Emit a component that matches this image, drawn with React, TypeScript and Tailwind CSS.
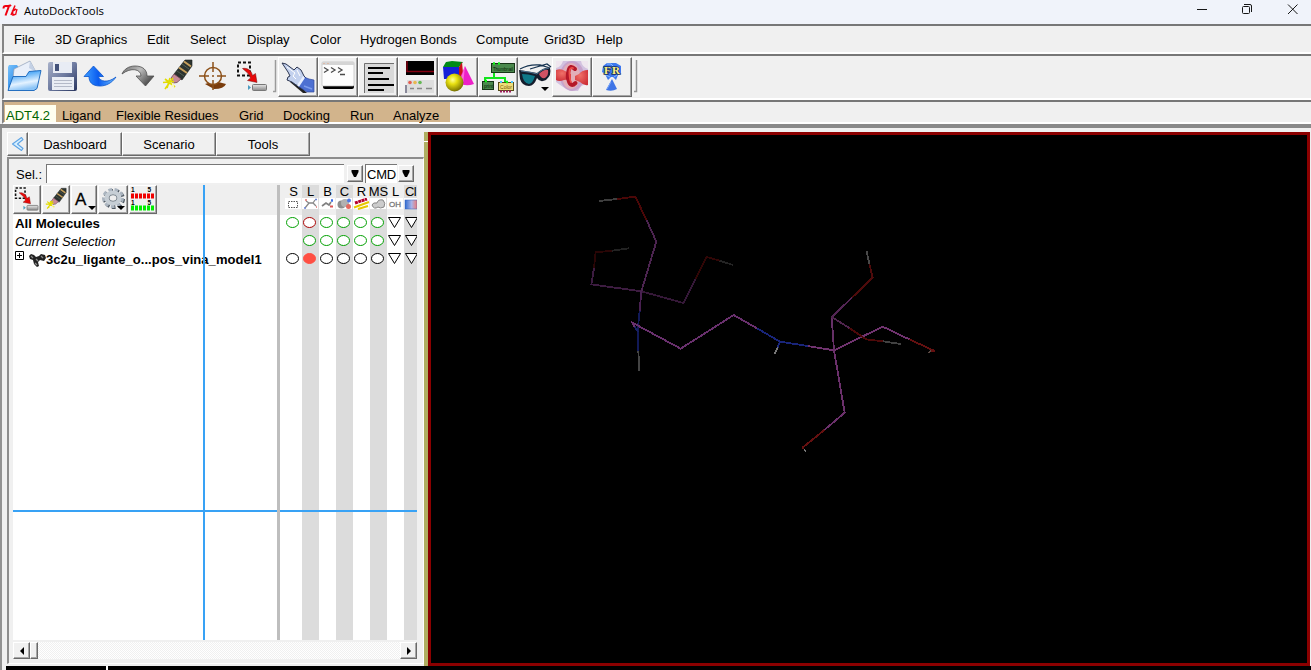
import React from "react";

type Box = [number, number, number, number];

function Art({ box, children, className = "" }: { box: Box; children: React.ReactNode; className?: string }) {
  return (
    <svg
      width={box[2]}
      height={box[3]}
      viewBox={box.join(" ")}
      className={"block shrink-0 " + className}
      fontFamily='"Liberation Sans", Arial, sans-serif'
    >
      {children}
    </svg>
  );
}

const raised =
  "border border-t-white border-l-white border-r-[#696969] border-b-[#696969] bg-[#f0f0f0] shadow-[inset_-1px_-1px_0_#a6a6a6]";

function Defs() {
  return (
    <svg width="0" height="0" className="absolute">
      <defs>
        <linearGradient id="folder" x1="0" y1="0" x2="1" y2="1">
          <stop offset="0" stopColor="#7cc4fb" />
          <stop offset="0.5" stopColor="#3b96ee" />
          <stop offset="1" stopColor="#0c55b8" />
        </linearGradient>
        <linearGradient id="folderFront" x1="0" y1="0" x2="0.3" y2="1">
          <stop offset="0" stopColor="#1f86f0" />
          <stop offset="0.3" stopColor="#5db0f8" />
          <stop offset="0.7" stopColor="#e4f2ff" />
          <stop offset="1" stopColor="#8cc4f6" />
        </linearGradient>
        <linearGradient id="disk" x1="0" y1="0" x2="1" y2="1">
          <stop offset="0" stopColor="#a9b2ca" />
          <stop offset="0.5" stopColor="#6e7ba0" />
          <stop offset="1" stopColor="#28345e" />
        </linearGradient>
        <linearGradient id="undo" x1="0" y1="0" x2="1" y2="0">
          <stop offset="0" stopColor="#3f9fff" />
          <stop offset="0.45" stopColor="#0a5cf0" />
          <stop offset="1" stopColor="#6fc0ff" />
        </linearGradient>
        <linearGradient id="redo" x1="0" y1="0" x2="1" y2="0.6">
          <stop offset="0" stopColor="#6c6c6c" />
          <stop offset="0.5" stopColor="#bdbdbd" />
          <stop offset="1" stopColor="#4a4a4a" />
        </linearGradient>
        <linearGradient id="silver" x1="0" y1="0" x2="0" y2="1">
          <stop offset="0" stopColor="#e8e8e8" />
          <stop offset="1" stopColor="#8a8a8a" />
        </linearGradient>
        <radialGradient id="yellow" cx="0.4" cy="0.35" r="0.7">
          <stop offset="0" stopColor="#ffff9a" />
          <stop offset="0.35" stopColor="#e8e010" />
          <stop offset="1" stopColor="#6c6600" />
        </radialGradient>
        <radialGradient id="redball" cx="0.4" cy="0.35" r="0.7">
          <stop offset="0" stopColor="#f07068" />
          <stop offset="1" stopColor="#cf3038" />
        </radialGradient>
        <linearGradient id="spectrum" x1="0" y1="0" x2="1" y2="0">
          <stop offset="0" stopColor="#2f6bd0" />
          <stop offset="0.55" stopColor="#a8b4e8" />
          <stop offset="1" stopColor="#ee7a78" />
        </linearGradient>
        <pattern id="dither" width="2" height="2" patternUnits="userSpaceOnUse">
          <rect width="2" height="2" fill="#fff" />
          <rect width="1" height="1" fill="#f0f0f0" />
          <rect x="1" y="1" width="1" height="1" fill="#f0f0f0" />
        </pattern>
      </defs>
    </svg>
  );
}

/* Shared drawings, placed in toolbar coordinates */
function EraserArt() {
  return (
    <g>
      <path d="M185 60h7v6l-10 14-8-6z" fill="#2c3330" stroke="#1c211f" strokeWidth=".6" />
      <path d="M184 61.500l7 5M179 67.500l8 5.500" stroke="#c8a05c" strokeWidth="2" />
      <path d="M182 64l7 5M177 71l7 5" stroke="#526052" strokeWidth="1" />
      <path d="M174 74l7 5-4 3.500-4 .5-2-5z" fill="#c88b98" stroke="#6a4450" strokeWidth=".8" />
      <path d="M170 78l-3 10M163 82.500l11-1M165 79l10 8M173 78l-8 11" stroke="#e2dc00" strokeWidth="1.700" />
      <path d="M169 91l4-7 1 5" stroke="#fbf8c8" strokeWidth="1.200" fill="none" />
    </g>
  );
}

function SelectArt() {
  return (
    <g>
      <rect x="238" y="62.500" width="12" height="13" fill="none" stroke="#111" strokeWidth="2" strokeDasharray="3 2" />
      <path d="M242.500 68.500c5-1 9 2 10 7l3-2 1.500 9-9.500-2 3-2.500c-1-4-4-6-8-9.500z" fill="#e80808" stroke="#6c1010" strokeWidth=".5" />
      <path d="M248 85l3 2.500-3 2.500z" fill="#4c9cc0" />
      <rect x="252.500" y="84.500" width="14" height="6" rx="1" fill="url(#silver)" stroke="#777" />
    </g>
  );
}

function FlatTools() {
  return (
    <>
      <Art box={[5, 57, 40, 40]}>
        <path d="M8 90V67l1-2h8l2 3 4 1v21z" fill="url(#folder)" />
        <path d="M14 69l16-8 6 11-2 6H13z" fill="#e9eff9" stroke="#8c9db8" strokeWidth=".7" />
        <path d="M30 61l-1 7 7 4z" fill="#c3d0e4" />
        <path d="M8 90.500l5-14h13l3-5 12-1-4 18-3 2z" fill="url(#folderFront)" stroke="#1463ba" strokeWidth=".9" />
      </Art>
      <Art box={[45, 57, 36, 40]}>
        <rect x="48" y="62" width="29" height="29" rx="2" fill="url(#disk)" />
        <path d="M53 62h19v11H53z" fill="#e8ecf4" />
        <rect x="55" y="64" width="4" height="7" fill="#43527a" />
        <path d="M52 77h22v13H52z" fill="#e9edf4" />
        <path d="M54 80.500h18M54 83.500h18M54 86.500h18" stroke="#b4bac8" />
      </Art>
      <Art box={[81, 57, 38, 40]}>
        <path d="M93.500 66l10 10.500h-5c1 5 9 7 17.500.5-4 6-10 9-16 9-8 0-11-4-11-9.500h-5z" fill="url(#undo)" stroke="#0753cd" strokeWidth=".8" />
      </Art>
      <Art box={[119, 57, 40, 40]}>
        <path d="M122 74c2-5 7-8 13-8 8 0 12 4 12 10h7l-8.500 10L136 76h5c0-7-10-9-19-2z" fill="url(#redo)" stroke="#505050" strokeWidth=".8" />
      </Art>
      <Art box={[159, 57, 37, 40]}><EraserArt /></Art>
      <Art box={[196, 57, 36, 40]}>
        <path d="M205 84q9-4 21 0-2 5-12 5z" fill="#7a3c0c" />
        <circle cx="213" cy="76" r="8.500" fill="#f0f0f0" stroke="#8c5018" strokeWidth="1.500" />
        <path d="M213 62v10M213 80v10M199 76h10M217 76h9M213 75v2" stroke="#8c5018" strokeWidth="1.500" />
      </Art>
      <Art box={[232, 57, 41, 40]}>
        <SelectArt />
      </Art>
      <Art box={[273, 57, 5, 40]}>
        <path d="M273 91.500h2.500V60" fill="none" stroke="#9b9b9b" strokeWidth="1.500" />
      </Art>
    </>
  );
}

function RaisedTool({ x, children }: { x: number; children: React.ReactNode }) {
  return (
    <div className={"h-[40px] w-[40px] shrink-0 " + raised}>
      <Art box={[x + 1, 58, 38, 38]}>{children}</Art>
    </div>
  );
}

function RaisedTools() {
  return (
    <>
      <RaisedTool x={278}>
        <path d="M290 82l13 11h4l-12-13z" fill="#222" />
        <path d="M282 63l4 1 8 6 3-3 4 3 3 6 3 3-5 7-6-1-4-3-5-2 1-3 2-1-2-4z" fill="#c3d1ee" stroke="#2b3550" strokeWidth="1" />
        <path d="M287 67l8 6-2 3 3 3M297 70l3 6" stroke="#fff" fill="none" />
        <path d="M304 77l5 2 5 1v12h-7l-9-6z" fill="#4d70d2" stroke="#334a9c" strokeWidth=".7" />
        <path d="M298 86l6-9" stroke="#e9f0ff" strokeWidth="2.500" />
        <path d="M304 86l8 3" stroke="#7d9cec" strokeWidth="1.500" />
      </RaisedTool>
      <RaisedTool x={318}>
        <rect x="323" y="84" width="31" height="5" rx="2" fill="#000" />
        <rect x="322" y="62" width="32" height="24" rx="1" fill="#fdfdfd" stroke="#bbb" strokeWidth=".7" />
        <path d="M322 62h32v3h-32z" fill="#d5d5d5" />
        <path d="M323 63.500h2M327 63.500h2" stroke="#dba" />
        <path d="M324 67.500l4 2.500-4 2.500M331 67.500l4 2.500-4 2.500M338 67.500l4 2.500-4 2.500M340 74.500h5" fill="none" stroke="#4a4a4a" strokeWidth="1.300" />
      </RaisedTool>
      <RaisedTool x={358}>
        <rect x="364" y="63" width="30" height="30" fill="#d9d9d9" />
        <path d="M364.500 93V63.500H394" fill="none" stroke="#707070" />
        <path d="M368 68h22M368 73h15M368 79h21M368 85h26M368 90h16" stroke="#000" strokeWidth="2" />
      </RaisedTool>
      <RaisedTool x={398}>
        <rect x="406" y="61" width="28" height="14" fill="#000" />
        <path d="M407 61v10.500h27" fill="none" stroke="#830010" strokeWidth="1.500" />
        <rect x="407" y="80" width="27" height="13" fill="#dedede" />
        <path d="M406 85v8" stroke="#224" />
        <circle cx="410" cy="82.500" r="1.800" fill="#e55c50" />
        <circle cx="415" cy="82.500" r="1.800" fill="#e8b850" />
        <circle cx="420" cy="82.500" r="1.800" fill="#65b855" />
        <path d="M410 88.500h4M417 88.500h5M426 88.500h6" stroke="#888" strokeWidth="1.500" />
      </RaisedTool>
      <RaisedTool x={438}>
        <path d="M443 67l3-5 6-1 11 1-4 5z" fill="#008b18" />
        <path d="M443 67h16v12h-15z" fill="#1620d8" />
        <path d="M459 67l3-5 1 11-4 6z" fill="#cc1018" />
        <path d="M465 66l9 18q-8 3-16-1z" fill="#ed20c8" />
        <path d="M465 66l-2 19-4-1z" fill="#ff68dd" />
        <circle cx="454.500" cy="82.500" r="9" fill="url(#yellow)" />
      </RaisedTool>
      <RaisedTool x={478}>
        <path d="M494 72v6M485 83v-5h20v5" fill="none" stroke="#11e51c" strokeWidth="2" />
        <rect x="491.500" y="63.500" width="23" height="9" fill="#4b884d" stroke="#173417" />
        <text x="493" y="70.500" fontSize="6" textLength="20" lengthAdjust="spacingAndGlyphs" fill="#001c00">Thumbnail</text>
        <rect x="482.500" y="81.500" width="11" height="8" fill="#4b884d" stroke="#173417" />
        <text x="484" y="88" fontSize="6" textLength="9" lengthAdjust="spacingAndGlyphs" fill="#001c00">print</text>
        <rect x="498.500" y="82.500" width="15" height="8" fill="#eedc78" stroke="#554b18" />
        <text x="500" y="89" fontSize="6" textLength="12" lengthAdjust="spacingAndGlyphs" fill="#754f00">Color</text>
        <path d="M493 63.500h2M498 63.500h2M485 81h2M506 82h2" stroke="#12ef18" strokeWidth="2.500" />
        <path d="M500 82h2M511 82h2" stroke="#4ac4ff" strokeWidth="2" />
        <path d="M500 91.500h12" stroke="#a02060" strokeWidth="2" strokeDasharray="2 1" />
      </RaisedTool>
      <Art box={[518, 57, 34, 40]}>
        <path d="M520 69q9-5 20-4l10 3M530 69l17-5 4 3" fill="none" stroke="#173451" strokeWidth="1.300" />
        <path d="M519 70q7 1 18 3 7-6 13-5 2 7-4 12-6 3-9-2-3 8-8 8-7 0-9-7z" fill="#151d2c" />
        <path d="M522 74q6 0 13 2-2 7-6 8-6-1-7-10z" fill="#0f7888" />
        <path d="M539 74q5-5 9-4 1 5-3 8-4 1-6-4z" fill="#d05263" />
        <path d="M521 71q10 1 16 3 4-5 12-6" fill="none" stroke="#5c88aa" strokeWidth=".8" />
        <path d="M541 87h8l-4 4z" fill="#000" />
      </Art>
      <RaisedTool x={552}>
        <rect x="556" y="61" width="32" height="30" fill="#d2c2df" />
        <path d="M556 91V82q8 6 14 9zM578 91q4-8 10-6v6z" fill="#f3eef2" />
        <path d="M556 61h7q-2 6-7 7zM581 61h7v8q-6-2-7-8z" fill="#efe6ee" />
        <ellipse cx="572" cy="76" rx="12" ry="15" fill="#b675af" opacity=".4" />
        <ellipse cx="571" cy="76" rx="9" ry="13" fill="#eeb3b0" opacity=".7" />
        <path d="M556 70q5-2 9 1l6 3v5l-7 1q-5 2-8 0z" fill="url(#redball)" />
        <path d="M588 70q-6 0-9 4l-4 2v4l5 2q4 4 8 3z" fill="url(#redball)" />
        <path d="M575 69q-5-5-6.500 2t0 9q2 8 7 3" stroke="#b41829" strokeWidth="4" fill="none" strokeLinecap="round" />
        <path d="M573 68q-4-1-3.500 6t1.500 8" stroke="#ef504b" strokeWidth="1.800" fill="none" strokeLinecap="round" />
      </RaisedTool>
      <RaisedTool x={592}>
        <path d="M603 66l4-3h9l5 3v7l-3 2-2 5-3-3h-2l-3 3-3-6-3-2z" fill="#3d78ef" />
        <path d="M607 64h4l3 3M617 75l-3 2M606 75l4 2" stroke="#8bb9fd" fill="none" />
        <text x="604" y="74" fontSize="11" fontWeight="bold" fontFamily="'Liberation Serif', serif" textLength="16" fill="#fff384" stroke="#172e62" strokeWidth="1.500" paintOrder="stroke">FR</text>
        <path d="M612 79l5 10q-5 3-11 1z" fill="#3f75e6" />
        <path d="M611 82l-4 7" stroke="#79a5f8" />
      </RaisedTool>
      <Art box={[632, 57, 8, 40]}>
        <path d="M632 57h8v40h-8z" fill="#f4f4f4" />
        <path d="M634 91.500h2.500V60" fill="none" stroke="#969696" strokeWidth="1.500" />
      </Art>
    </>
  );
}

const menus: [string, string][] = [
  ["File", "w-[41px]"],
  ["3D Graphics", "w-[92px]"],
  ["Edit", "w-[43px]"],
  ["Select", "w-[57px]"],
  ["Display", "w-[63px]"],
  ["Color", "w-[50px]"],
  ["Hydrogen Bonds", "w-[116px]"],
  ["Compute", "w-[68px]"],
  ["Grid3D", "w-[52px]"],
  ["Help", "w-[40px]"],
];

const dockMenus: [string, string][] = [
  ["Ligand", "w-[54px]"],
  ["Flexible Residues", "w-[123px]"],
  ["Grid", "w-[44px]"],
  ["Docking", "w-[67px]"],
  ["Run", "w-[43px]"],
  ["Analyze", "w-[57px]"],
];

const columnNames = ["S", "L", "B", "C", "R", "MS", "L", "Cl"];

function DropButton() {
  return (
    <button className={"flex h-[17px] w-[16px] items-center justify-center " + raised}>
      <svg width="8" height="8" viewBox="0 0 8 8"><path d="M.5 0h7v2L5 7H3L.5 2z" /></svg>
    </button>
  );
}

function SmallTools() {
  return (
    <div className="flex h-[29px]">
      <div className={"mr-px h-[29px] w-[28px] " + raised}>
        <svg width="26" height="27" viewBox="236 60 33 34"><SelectArt /></svg>
      </div>
      <div className={"mr-px h-[29px] w-[28px] " + raised}>
        <svg width="26" height="27" viewBox="159 57 37 38"><EraserArt /></svg>
      </div>
      <div className={"mr-px h-[29px] w-[26px] " + raised}>
        <Art box={[0, 0, 24, 27]}>
          <text x="3" y="19" fontSize="17" stroke="#000" strokeWidth=".3">A</text>
          <path d="M16 20h8l-4 4z" />
        </Art>
      </div>
      <div className={"mr-px h-[29px] w-[30px] " + raised}>
        <Art box={[0, 0, 28, 27]}>
          <ellipse cx="15" cy="13" rx="9" ry="8" fill="none" stroke="#4f5963" strokeWidth="4" strokeDasharray="3.500 2.400" />
          <ellipse cx="14" cy="12" rx="9" ry="8" fill="none" stroke="#aab4bf" strokeWidth="4" strokeDasharray="3.500 2.400" />
          <ellipse cx="14" cy="12" rx="6.500" ry="5.500" fill="none" stroke="#c6ced5" strokeWidth="4" />
          <ellipse cx="14" cy="12" rx="4" ry="3.300" fill="#eee" stroke="#7b8690" />
          <path d="M18 20h8l-4 4z" />
        </Art>
      </div>
      <div className={"h-[29px] w-[28px] " + raised}>
        <Art box={[0, 0, 26, 27]}>
          <text x="1" y="6" fontSize="6.500" fontWeight="bold">1</text><text x="17.500" y="6" fontSize="6.500" fontWeight="bold">5</text>
          <path d="M1 10h23" stroke="#f00000" strokeWidth="5" strokeDasharray="3 1" />
          <text x="1" y="18.500" fontSize="6.500" fontWeight="bold">1</text><text x="17.500" y="18.500" fontSize="6.500" fontWeight="bold">5</text>
          <path d="M1 22h23" stroke="#00ee00" strokeWidth="5" strokeDasharray="3 1" />
        </Art>
      </div>
    </div>
  );
}

function ColumnIcons() {
  return (
    <Art box={[280, 198, 137, 12]}>
      {[285, 302, 319, 336, 353, 370, 387, 404].map((x) => (
        <rect key={x} x={x} y="198" width="16" height="11" fill="#fff" />
      ))}
      <rect x="288.500" y="201.500" width="9" height="6" fill="none" stroke="#555" strokeDasharray="1.500 1" />
      <path d="M305 208l4-5h4l3 3M309 203l-3-2M313 203l2-3" fill="none" stroke="#888" strokeWidth="1.300" />
      <path d="M304 208h2M315 199.500h2" stroke="#6c84d8" strokeWidth="1.500" />
      <path d="M305 200h2M316 207h1" stroke="#e07070" strokeWidth="1.500" />
      <path d="M322 206l4-3 3 2 2-3" fill="none" stroke="#808080" strokeWidth="1.700" />
      <path d="M331 200.500h2" stroke="#3b6ce5" strokeWidth="2.500" /><path d="M330 206.500h3" stroke="#d55" strokeWidth="2" />
      <circle cx="341.500" cy="204.500" r="4" fill="#8e8e8e" /><circle cx="345" cy="203" r="4" fill="#b1b1b1" />
      <circle cx="349" cy="200.500" r="2" fill="#4f79e5" /><circle cx="348.500" cy="206.500" r="2.500" fill="#e46a60" />
      <path d="M355 203l12-4" stroke="#b5002d" strokeWidth="3" strokeDasharray="3 .5" />
      <path d="M354 207.500l15-5.500M358 209l10-3" stroke="#e7c800" strokeWidth="2" />
      <path d="M372 205q1-3 5-2 1-4 6-3 3 3 1 7-4 2-6 0-4 3-6-2z" fill="#ccc" stroke="#888" />
      <text x="389" y="207" fontSize="8" fill="#777" stroke="#777" strokeWidth=".3">OH</text>
      <rect x="405" y="200" width="12" height="9" fill="url(#spectrum)" stroke="#3162bd" strokeWidth=".5" />
    </Art>
  );
}

function IndicatorRow({ kind }: { kind: "all" | "selection" | "molecule" }) {
  return (
    <Art box={[280, 0, 137, 18]}>
      {[0, 1, 2, 3, 4, 5].map((i) => {
        if (kind === "selection" && i === 0) return null;
        const active = i === 1 && kind === "molecule";
        const stroke = active ? "#ff4f43" : kind === "molecule" ? "#000" : kind === "all" && i === 1 ? "#aa0000" : "#00a000";
        return (
          <ellipse key={i} cx={292.5 + 17 * i} cy="7.500" rx="6" ry="5" fill={active ? "#ff4f43" : "#fff"} stroke={stroke} />
        );
      })}
      {[394.5, 411.5].map((x) => (
        <path key={x} d={`M${x - 6} 2.500h12l-6 10z`} fill="#fff" stroke="#000" />
      ))}
    </Art>
  );
}

function ScrollArrow({ right = false }: { right?: boolean }) {
  return (
    <button className={"flex h-[17px] w-[17px] shrink-0 items-center justify-center " + raised}>
      <svg width="4" height="8" viewBox="0 0 4 8"><path d={right ? "M0 0l4 4-4 4z" : "M4 0L0 4l4 4z"} /></svg>
    </button>
  );
}

function Dashboard() {
  return (
    <div className="flex h-[507px] w-[417px] flex-col border-t-2 border-r border-b border-l-2 border-t-[#8d8d8d] border-r-white border-b-white border-l-[#8d8d8d] pt-[5px] pl-[4px]">
      <div className="flex h-[21px]">
        <span className="w-[33px] pt-px pl-[3px] leading-[19px]">Sel.:</span>
        <div className="h-[19px] w-[298px] border-t border-l border-[#777] bg-white" />
        <div className="w-[21px] pt-px pl-[3px]"><DropButton /></div>
        <div className="h-[19px] w-[32px] border-t border-l border-[#777] bg-white pt-px pl-px leading-[17px] tracking-[-0.2px]">CMD</div>
        <div className="pt-px pl-px"><DropButton /></div>
      </div>

      <div className="flex h-[455px] w-[404px]">
        <section className="relative w-[264px] overflow-hidden bg-white">
          <div className="h-[30px] bg-[#efefef]"><SmallTools /></div>
          <div className="h-[18px] pl-[2px] text-[13.3px] leading-[17px] font-bold">All Molecules</div>
          <div className="h-[18px] pl-[2px] leading-[18px] italic">Current Selection</div>
          <div className="flex h-[18px] pl-[2px]">
            <svg width="31" height="18" viewBox="15 251 31 18">
              <path d="M15.500 251.500h8v8h-8zM17 255.500h5M19.500 253v5" fill="none" stroke="#000" />
              <path d="M29 256l2-2 3 1 2 2 3-1 2-2 4 1 1 3-2 3-4-1-2 2 1 4-2 1-3-3-1-4-3-1z" fill="#222" />
              <path d="M31 256l2 2M36 259l2 2M35 263l2 2M41 256l2 2" stroke="#8b8b8b" strokeWidth="1.300" />
            </svg>
            <span className="text-[13px] leading-[17px] font-bold tracking-[0.06px] whitespace-nowrap">3c2u_ligante_o...pos_vina_model1</span>
          </div>
          <div className="absolute top-0 left-[190px] h-full w-[2px] bg-[#38a2f5]" />
          <div className="absolute top-[325px] left-0 h-[2px] w-full bg-[#38a2f5]" />
        </section>
        <div className="w-[3px] bg-[#bebebe]" />
        <section className="relative w-[137px] overflow-hidden bg-white">
          <div className="h-[30px] bg-[#efefef]" />
          <div className="absolute inset-0 flex pl-[5px]">
            {columnNames.map((name, i) => (
              <div
                key={i}
                className={
                  "flex shrink-0 leading-[14px] " +
                  (i === 7 ? "w-[13px] justify-start pl-px tracking-[-0.6px] " : "w-[17px] justify-center ") +
                  (i % 2 ? "bg-[#dcdcdc]" : "")
                }
              >
                <span className="whitespace-nowrap">{name}</span>
              </div>
            ))}
          </div>
          <div className="absolute top-[13px] left-0"><ColumnIcons /></div>
          <div className="absolute top-[30px] left-0">
            <IndicatorRow kind="all" />
            <IndicatorRow kind="selection" />
            <IndicatorRow kind="molecule" />
          </div>
          <div className="absolute top-[325px] left-0 h-[2px] w-full bg-[#38a2f5]" />
        </section>
      </div>

      <div className="mt-[2px] flex w-[404px]">
        <ScrollArrow />
        <div className={"h-[17px] w-[8px] " + raised} />
        <svg width="362" height="17"><rect width="362" height="17" fill="url(#dither)" /></svg>
        <ScrollArrow right />
      </div>
    </div>
  );
}

/* Bond segments: colour followed by the end points */
const bonds: [string, string][] = [
  ["#3e3e3e", "88,63 142,57"],
  ["#4b0707", "142,57 196,50 229,119"],
  ["#4c2450", "229,119 259,185 214,334"],
  ["#290505", "126,212 77,217 72,264"],
  ["#222222", "126,212 177,205"],
  ["#3d1c41", "72,264 64,313 214,334"],
  ["#351838", "214,334 340,369 376,298"],
  ["#310606", "376,298 410,231 449,242"],
  ["#242424", "449,242 489,255"],
  ["#482050", "214,334 209,393"],
  ["#111957", "209,393 204,440 204,513"],
  ["#444444", "205,513 208,572"],
  ["#182064", "204,456 194,440"],
  ["#69306d", "194,440 187,428 332,506 491,405 561,445"],
  ["#19257a", "561,445 630,485 713,498"],
  ["#19257a", "630,485 623,502"],
  ["#777777", "623,502 614,522"],
  ["#70336f", "713,498 792,511 938,440 1018,478"],
  ["#641010", "1018,478 1094,513 1084,513"],
  ["#5a4943", "1082,512 1075,519"],
  ["#663067", "792,511 785,411"],
  ["#532554", "785,411 846,353"],
  ["#4e0b0b", "846,353 908,293 898,251"],
  ["#484848", "898,251 890,214"],
  ["#50254e", "785,411 838,444"],
  ["#4d0909", "838,444 888,478 939,484"],
  ["#414141", "939,484 993,492"],
  ["#6b306b", "792,511 824,698 763,750"],
  ["#641010", "763,750 700,801 700,808"],
  ["#777777", "702,808 708,815"],
];

export default function App() {
  return (
    <main className="flex h-[670px] w-[1311px] flex-col overflow-hidden bg-[#f0f0f0] font-['Liberation_Sans',Arial,sans-serif] text-[13px] text-black">
      <Defs />
      <header className="flex h-[24px] shrink-0 items-start bg-[#f0f3fa]">
        <svg width="24" height="23" viewBox="0 0 24 23">
          <path d="M3.500 8.500q0-3 3-2.500 3 .5 4.500-1M9 6l-3.500 9.500" fill="none" stroke="#f00010" strokeWidth="2" />
          <path d="M15 5.500l-4 9.500M12 11.500l4-2.500M12.500 11.500l.5 3.500 2-.5" fill="none" stroke="#f00010" strokeWidth="1.500" />
          <path d="M17 9l-1.500 6" fill="none" stroke="#f00010" strokeWidth="1.300" />
        </svg>
        <h1 className="grow pt-px font-['Open_Sans','Noto_Sans',sans-serif] text-[11.4px] leading-[20px] font-normal">AutoDockTools</h1>
        <svg width="116" height="23" viewBox="1195 0 116 23" fill="none" stroke="#161616" strokeWidth="1">
          <path d="M1197 9.500h10M1288 4.500l9.500 9.500M1297.500 4.500l-9.500 9.500" />
          <rect x="1242.500" y="6.500" width="7" height="7" rx="1" />
          <path d="M1244 4.500h6q1.500 0 1.500 1.500v6" />
        </svg>
      </header>

      <nav className="ml-[2px] flex h-[30px] shrink-0 items-center border-t-2 border-b-2 border-l-2 border-t-[#777] border-b-white border-l-[#858585] pt-[2px] pl-[10px] leading-[26px]">
        {menus.map(([label, width]) => (
          <span key={label} className={"shrink-0 whitespace-nowrap " + width}>{label}</span>
        ))}
      </nav>

      <div className="ml-[2px] flex h-[46px] shrink-0 border-t-2 border-b-2 border-l-2 border-t-[#777] border-b-white border-l-[#858585] pt-px pl-px">
        <FlatTools />
        <RaisedTools />
      </div>

      <nav className="ml-[2px] flex h-[24px] shrink-0 border-t-2 border-b-2 border-l-2 border-t-[#777] border-b-white border-l-[#858585]">
        <div className="flex w-[446px] bg-[#d2b48c] leading-[27px]">
          <span className="mt-[3px] mr-[6px] ml-px w-[51px] bg-[#fffff0] pl-px leading-[21px] text-[#006400]">ADT4.2</span>
          {dockMenus.map(([label, width]) => (
            <span key={label} className={"shrink-0 whitespace-nowrap " + width}>{label}</span>
          ))}
        </div>
      </nav>

      <div className="flex h-[546px] shrink-0 border-t-4 border-[#898989]">
        <aside className="flex h-[542px] w-[424px] shrink-0 flex-col border-l-2 border-[#929292] pt-[4px] pl-[5px]">
          <div className="flex h-[25px]">
            <button className={"flex h-[24px] w-[21px] items-center justify-center " + raised}>
              <svg width="16" height="16" viewBox="0 0 16 16"><path d="M11.500 1.500L2.500 8l9 6.500 1.500-2L7.500 8 13 3.500z" fill="#d6efff" stroke="#5ea4e5" strokeWidth="1.100" strokeLinejoin="round" /></svg>
            </button>
            {["Dashboard", "Scenario", "Tools"].map((tab) => (
              <button key={tab} className={"h-[24px] w-[94px] pt-px " + raised}>{tab}</button>
            ))}
          </div>
          <Dashboard />
          <div className="mt-[2px] -ml-px flex h-[4px] w-[418px] bg-black"><div className="ml-[100px] w-[2px] bg-white" /></div>
        </aside>
        <div className="flex w-[4px] flex-col bg-[#afaf62]">
          <div className="h-[4px] bg-[#f0f0f0]" />
          <div className="h-[9px]" />
          <div className="h-px bg-white" />
          <div className="grow" />
          <div className="h-[4px] bg-black" />
        </div>
        <div className="w-[883px] pt-[4px]">
          <div className="h-[534px] w-[882px] border-[3px] border-[#8b0000] bg-black">
            <svg width="876" height="528" viewBox="431 135 876 528" shapeRendering="crispEdges">
              <g transform="translate(570 180) scale(.333333)" fill="none" strokeWidth="5.500">
                {bonds.map(([color, points], i) => <polyline key={i} points={points} stroke={color} />)}
              </g>
            </svg>
          </div>
          <div className="h-[4px] bg-black" />
        </div>
      </div>
    </main>
  );
}
